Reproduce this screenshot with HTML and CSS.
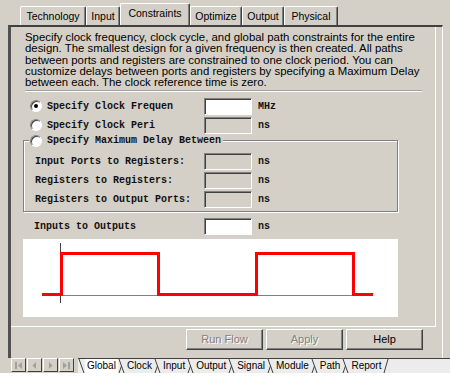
FILE: index.html
```html
<!DOCTYPE html>
<html lang="en">
<head>
  <meta charset="UTF-8">
  <title>Constraints</title>
  <link rel="stylesheet" href="styles.css">
</head>
<body>
<div class="window">

  <div class="tabs">
    <div class="tab tab-tech">Technology</div>
    <div class="tab tab-input">Input</div>
    <div class="tab tab-cons active">Constraints</div>
    <div class="tab tab-opt">Optimize</div>
    <div class="tab tab-out">Output</div>
    <div class="tab tab-phys">Physical</div>
  </div>

  <div class="frame">
    <div class="page">
      <p class="desc">Specify clock frequency, clock cycle, and global path constraints for the entire<br>design. The smallest design for a given frequency is then created. All paths<br>between ports and registers are constrained to one clock period. You can<br>customize delays between ports and registers by specifying a Maximum Delay<br>between each. The clock reference time is zero.</p>
      <div class="sep"></div>

      <div class="row first">
        <label class="opt"><span class="radio checked"></span>Specify Clock Frequen</label>
        <input class="field on" type="text">
        <span class="unit">MHz</span>
      </div>
      <div class="row">
        <label class="opt"><span class="radio"></span>Specify Clock Peri</label>
        <input class="field" type="text" disabled>
        <span class="unit">ns</span>
      </div>

      <fieldset class="group">
        <legend class="opt"><span class="radio"></span>Specify Maximum Delay Between</legend>
        <div class="row">
          <span class="lbl">Input Ports to Registers:</span>
          <input class="field" type="text" disabled>
          <span class="unit">ns</span>
        </div>
        <div class="row">
          <span class="lbl">Registers to Registers:</span>
          <input class="field" type="text" disabled>
          <span class="unit">ns</span>
        </div>
        <div class="row">
          <span class="lbl">Registers to Output Ports:</span>
          <input class="field" type="text" disabled>
          <span class="unit">ns</span>
        </div>
      </fieldset>

      <div class="row io">
        <span class="lbl">Inputs to Outputs</span>
        <input class="field on" type="text">
        <span class="unit">ns</span>
      </div>

      <svg class="chart" viewBox="0 0 375 78" width="375" height="78">
        <line x1="37.5" y1="4" x2="37.5" y2="64" stroke="#404040" stroke-width="1"/>
        <path d="M38 56.5 H135 M233 56.5 H330" stroke="#808080" stroke-width="1" fill="none"/>
        <path d="M19 55.5 H38.5 V14.5 H135.5 V55.5 H233.5 V14.5 H330.5 V55.5 H350" stroke="#ff0000" stroke-width="3" fill="none"/>
      </svg>
    </div>

    <div class="buttons">
      <button class="btn" disabled>Run Flow</button>
      <button class="btn" disabled>Apply</button>
      <button class="btn">Help</button>
    </div>
  </div>

  <div class="sheets">
    <div class="nav">
      <span class="nav-btn"><svg width="13" height="12"><rect x="3" y="3" width="2" height="7" fill="#a0a0a0"/><polygon points="10,3 10,10 6,6.5" fill="#a0a0a0"/></svg></span>
      <span class="nav-btn"><svg width="13" height="12"><polygon points="8,3 8,10 4.5,6.5" fill="#a0a0a0"/></svg></span>
      <span class="nav-btn"><svg width="13" height="12"><polygon points="5,3 5,10 8.5,6.5" fill="#a0a0a0"/></svg></span>
      <span class="nav-btn"><svg width="13" height="12"><polygon points="3,3 3,10 7,6.5" fill="#a0a0a0"/><rect x="8" y="3" width="2" height="7" fill="#a0a0a0"/></svg></span>
    </div>
    <div class="sheet-tabs">
      <svg class="slant" width="7" height="14"><path d="M1 0 L6 14" stroke="#404040" fill="none"/></svg>
      <span class="sheet active">Global</span>
      <svg class="slant" width="7" height="14"><path d="M1 0 L6 14 M1 14 L3.5 7" stroke="#404040" fill="none"/></svg>
      <span class="sheet">Clock</span>
      <svg class="slant" width="7" height="14"><path d="M1 0 L6 14 M1 14 L3.5 7" stroke="#404040" fill="none"/></svg>
      <span class="sheet">Input</span>
      <svg class="slant" width="7" height="14"><path d="M1 0 L6 14 M1 14 L3.5 7" stroke="#404040" fill="none"/></svg>
      <span class="sheet">Output</span>
      <svg class="slant" width="7" height="14"><path d="M1 0 L6 14 M1 14 L3.5 7" stroke="#404040" fill="none"/></svg>
      <span class="sheet">Signal</span>
      <svg class="slant" width="7" height="14"><path d="M1 0 L6 14 M1 14 L3.5 7" stroke="#404040" fill="none"/></svg>
      <span class="sheet">Module</span>
      <svg class="slant" width="7" height="14"><path d="M1 0 L6 14 M1 14 L3.5 7" stroke="#404040" fill="none"/></svg>
      <span class="sheet">Path</span>
      <svg class="slant" width="7" height="14"><path d="M1 0 L6 14 M1 14 L3.5 7" stroke="#404040" fill="none"/></svg>
      <span class="sheet">Report</span>
      <svg class="slant" width="7" height="14"><path d="M1 14 L5 0" stroke="#404040" fill="none"/></svg>
    </div>
  </div>

</div>
</body>
</html>
```

FILE: styles.css
```css
body {
  margin: 0;
  background: #fff;
}

.window {
  width: 450px;
  height: 373px;
  background: #d4d0c8;
  font-family: "Liberation Sans", Arial, sans-serif;
  color: #000;
}

/* TOP TABS */
.tabs {
  display: flex;
  align-items: flex-end;
  height: 25px;
  padding-left: 20px;
  box-sizing: border-box;
}

.tab {
  height: 19px;
  box-sizing: border-box;
  border-top: 1px solid #fff;
  border-left: 1px solid #fff;
  border-right: 1px solid #404040;
  border-radius: 2px 2px 0 0;
  box-shadow: inset -1px 0 #808080;
  font-size: 10.5px;
  line-height: 18px;
  text-align: center;
}

.tab.active {
  height: 22px;
  line-height: 19px;
}

.tab-tech { width: 66px; }
.tab-input { width: 34px; }
.tab-cons { width: 70px; }
.tab-opt { width: 52px; }
.tab-out { width: 42px; }
.tab-phys { width: 54px; }

/* FRAME AND PAGE */
.frame {
  margin-left: 8px;
  width: 435px;
  height: 333px;
  box-sizing: border-box;
  border-top: 2px solid #404040;
  border-left: 3px solid #505050;
  border-right: 1px solid #fff;
}

.page {
  width: 425px;
  box-sizing: border-box;
  padding: 5px 0 9px 12px;
  border-right: 1px solid #fff;
  border-bottom: 1px solid #fff;
}

.desc {
  margin: 0 0 0 2px;
  font-size: 11.4px;
  line-height: 11.3px;
  white-space: nowrap;
}

.sep {
  margin: 1.5px 0 0 2px;
  width: 397px;
  border-top: 1px solid #a0a0a0;
  border-bottom: 1px solid #fff;
}

.row {
  display: grid;
  grid-template-columns: 181px 48px auto;
  align-items: center;
  height: 17px;
  margin-top: 2px;
}

.row.first {
  margin-top: 6px;
}

.opt, .lbl, .unit {
  font-family: "Liberation Mono", monospace;
  font-size: 10px;
  font-weight: bold;
  white-space: nowrap;
  color: #111;
}

.opt {
  display: flex;
  align-items: center;
}

.lbl {
  padding-left: 11px;
}

.unit {
  padding-left: 6px;
}

.radio {
  display: grid;
  place-items: center;
  width: 12px;
  height: 12px;
  box-sizing: border-box;
  margin: 0 5px 0 7px;
  border: 1px solid;
  border-color: #808080 #fff #fff #808080;
  border-radius: 50%;
  background: #fff;
  box-shadow: inset 1px 1px #404040;
}

.radio.checked::after {
  content: "";
  width: 4px;
  height: 4px;
  border-radius: 50%;
  background: #000;
}

.field {
  width: 48px;
  height: 17px;
  box-sizing: border-box;
  margin: 0;
  padding: 0;
  border: 1px solid;
  border-color: #808080 #fff #fff #808080;
  box-shadow: inset 1px 1px #404040;
  background: #d4d0c8;
  outline: none;
}

.field.on {
  background: #fff;
}

/* GROUP BOX */
.group {
  margin: 1px 0 0 0;
  padding: 6px 0 3px;
  width: 375px;
  min-width: 0;
  box-sizing: border-box;
  border: 1px solid #808080;
  box-shadow: 1px 1px #fff, inset 1px 1px #fff;
}

.group legend {
  margin-left: 5px;
  padding: 0 2px 0 0;
  line-height: 12px;
  background: #d4d0c8;
}

.group legend .radio {
  margin-left: 1px;
}

.group .row {
  grid-template-columns: 180px 48px auto;
}

.group .row:first-of-type {
  margin-top: 0;
}

.row.io {
  margin-top: 6px;
}

.chart {
  display: block;
  margin-top: 4px;
  background: #fff;
}

/* BUTTONS */
.buttons {
  display: flex;
  justify-content: flex-end;
  gap: 3px;
  width: 425px;
  box-sizing: border-box;
  padding: 2px 13px 0 0;
}

.btn {
  width: 77px;
  height: 21px;
  padding: 0;
  background: #d4d0c8;
  border: 1px solid;
  border-color: #fff #404040 #404040 #fff;
  box-shadow: inset -1px -1px #808080;
  font-family: "Liberation Sans", Arial, sans-serif;
  font-size: 11px;
  color: #000;
}

.btn:disabled {
  color: #808080;
  text-shadow: 1px 1px #fff;
}

/* SHEET TABS */
.sheets {
  display: flex;
  height: 15px;
  padding-left: 11px;
}

.nav {
  display: flex;
  gap: 1px;
}

.nav-btn {
  width: 15px;
  height: 14px;
  box-sizing: border-box;
  border: 1px solid;
  border-color: #fff #404040 #404040 #fff;
  background: #d4d0c8;
}

.nav-btn svg {
  display: block;
}

.sheet-tabs {
  display: flex;
  flex: 1;
  margin-left: 4px;
  border-top: 1px solid #404040;
  background: #ececec;
  font-size: 10px;
  line-height: 14px;
}

.sheet {
  padding: 0 2px;
}

.sheet.active {
  background: #fff;
}

.slant {
  display: block;
  flex: none;
}
```
